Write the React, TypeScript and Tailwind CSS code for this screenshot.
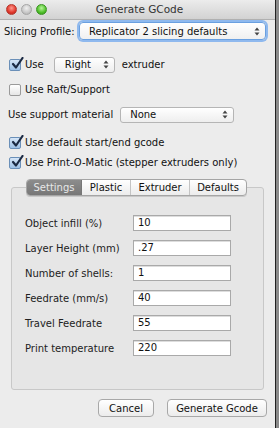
import React from "react";

const font = { fontFamily: '"DejaVu Sans", "Liberation Sans", sans-serif' };

function Check({ checked }: { checked: boolean }) {
  return (
    <div
      className={`w-[12px] h-[12px] rounded-[2px] border ${
        checked ? "border-[#6a8fb8] bg-gradient-to-b from-[#d6e6f7] to-[#9dc0e6]" : "border-[#9a9a9a] bg-gradient-to-b from-white to-[#e6e6e6]"
      } relative shrink-0`}
    >
      {checked && (
        <svg className="absolute left-[1px] top-[-3px]" width="13" height="13" viewBox="0 0 13 13">
          <path d="M2 7 L5 10.5 L11.5 1" stroke="#1b2a44" strokeWidth="2.2" fill="none" strokeLinecap="round" strokeLinejoin="round" />
        </svg>
      )}
    </div>
  );
}

function Arrows() {
  return (
    <svg width="6" height="9" viewBox="0 0 6 9">
      <path d="M0.5 3.5 L3 0.5 L5.5 3.5 Z" fill="#444" />
      <path d="M0.5 5.5 L3 8.5 L5.5 5.5 Z" fill="#444" />
    </svg>
  );
}

const T = "text-[10px] text-[#111]";

function Field({ label, value }: { label: string; value: string }) {
  return (
    <div className="flex items-center h-[16px]">
      <div className="w-[108px] text-[10px] text-[#222]">{label}</div>
      <div className="w-[98px] h-[16px] border border-[#a9a9a9] bg-white shadow-[inset_0_1px_0_#ddd] text-[10px] text-[#111] pl-[4px] leading-[14px]">
        {value}
      </div>
    </div>
  );
}

export default function App() {
  return (
    <div className="w-[279px] h-[428px] bg-[#8a8a8a] flex" style={font}>
      <div className="w-[276px] h-[428px] bg-[#ececec] border-r border-[#222] flex flex-col relative">
        {/* title bar */}
        <div className="h-[20px] shrink-0 bg-gradient-to-b from-[#ececec] to-[#d2d2d2] border-b border-[#b0b0b0] flex items-center relative">
          <div className="flex gap-[4px] pl-[6px]">
            <div className="w-[11px] h-[11px] rounded-full bg-[radial-gradient(circle_at_50%_35%,#ff9a8f,#e0362a_60%,#a8261c)] border border-[#b53a30]" />
            <div className="w-[11px] h-[11px] rounded-full bg-[radial-gradient(circle_at_50%_35%,#f0f0f0,#c8c8c8_60%,#a8a8a8)] border border-[#a6a6a6]" />
            <div className="w-[11px] h-[11px] rounded-full bg-[radial-gradient(circle_at_50%_35%,#b7f59a,#4fbf2a_60%,#2f8a17)] border border-[#3a9422]" />
          </div>
          <div className="absolute inset-0 flex items-center justify-center text-[10.5px] text-[#333] pl-[4px]">Generate GCode</div>
        </div>

        {/* slicing profile */}
        <div className="flex items-center mt-[2px] pl-[4px] h-[18px] whitespace-nowrap">
          <span className={T}>Slicing Profile:</span>
          <div className="ml-auto mr-[9px] w-[187px] h-[18px] rounded-[4px] border border-[#6aa0e0] shadow-[0_0_0_2px_#8fb9ee] bg-gradient-to-b from-white to-[#f0f0f0] flex items-center pl-[9px] pr-[5px]">
            <span className={`${T} flex-1`}>Replicator 2 slicing defaults</span>
            <Arrows />
          </div>
        </div>

        {/* use extruder */}
        <div className="flex items-center mt-[16px] pl-[9px] h-[17px]">
          <Check checked />
          <span className={`ml-[4px] ${T}`}>Use</span>
          <div className="ml-[10px] w-[61px] h-[16px] rounded-[3px] border border-[#b5b5b5] bg-gradient-to-b from-white to-[#eeeeee] flex items-center pl-[10px] pr-[5px]">
            <span className={`${T} flex-1`}>Right</span>
            <Arrows />
          </div>
          <span className={`ml-[7px] ${T}`}>extruder</span>
        </div>

        <div className="flex items-center mt-[8px] pl-[9px] h-[17px]">
          <Check checked={false} />
          <span className={`ml-[4px] ${T}`}>Use Raft/Support</span>
        </div>

        <div className="flex items-center mt-[8px] pl-[8px] h-[17px]">
          <span className={T}>Use support material</span>
          <div className="ml-[7px] w-[114px] h-[16px] rounded-[3px] border border-[#b5b5b5] bg-gradient-to-b from-white to-[#eeeeee] flex items-center pl-[9px] pr-[5px]">
            <span className={`${T} flex-1`}>None</span>
            <Arrows />
          </div>
        </div>

        <div className="flex items-center mt-[11px] pl-[9px] h-[17px]">
          <Check checked />
          <span className={`ml-[4px] ${T}`}>Use default start/end gcode</span>
        </div>
        <div className="flex items-center mt-[3px] pl-[9px] h-[17px]">
          <Check checked />
          <span className={`ml-[4px] ${T}`}>Use Print-O-Matic (stepper extruders only)</span>
        </div>

        {/* tab panel */}
        <div className="relative mt-[16px] mx-[11px] h-[203px] border border-[#c8c8c8] rounded-[3px] bg-[#e6e6e6]">
          <div className="absolute left-[14px] top-[-9px] flex h-[17px] rounded-[4px] border border-[#a5a5a5] bg-gradient-to-b from-white to-[#ececec] overflow-hidden shadow-[0_1px_0_#c8c8c8]">
            <div className="w-[55px] flex items-center justify-center bg-gradient-to-b from-[#8c8c8c] to-[#777] text-[10px] text-[#e8e8e8] border-r border-[#777]">Settings</div>
            <div className={`w-[49px] flex items-center justify-center ${T} border-r border-[#c4c4c4]`}>Plastic</div>
            <div className={`w-[59px] flex items-center justify-center ${T} border-r border-[#c4c4c4]`}>Extruder</div>
            <div className={`w-[56px] flex items-center justify-center ${T}`}>Defaults</div>
          </div>
          <div className="flex flex-col gap-[9px] pl-[13px] pt-[27px]">
            <Field label="Object infill (%)" value="10" />
            <Field label="Layer Height (mm)" value=".27" />
            <Field label="Number of shells:" value="1" />
            <Field label="Feedrate (mm/s)" value="40" />
            <Field label="Travel Feedrate" value="55" />
            <Field label="Print temperature" value="220" />
          </div>
        </div>

        {/* buttons */}
        <div className="flex justify-end gap-[13px] pr-[8px] mt-[9px]">
          <div className={`w-[56px] h-[18px] rounded-[4px] border border-[#a8a8a8] bg-gradient-to-b from-white to-[#ececec] flex items-center justify-center ${T}`}>Cancel</div>
          <div className={`w-[100px] h-[18px] rounded-[4px] border border-[#a8a8a8] bg-gradient-to-b from-white to-[#ececec] flex items-center justify-center ${T}`}>Generate Gcode</div>
        </div>
      </div>
    </div>
  );
}
